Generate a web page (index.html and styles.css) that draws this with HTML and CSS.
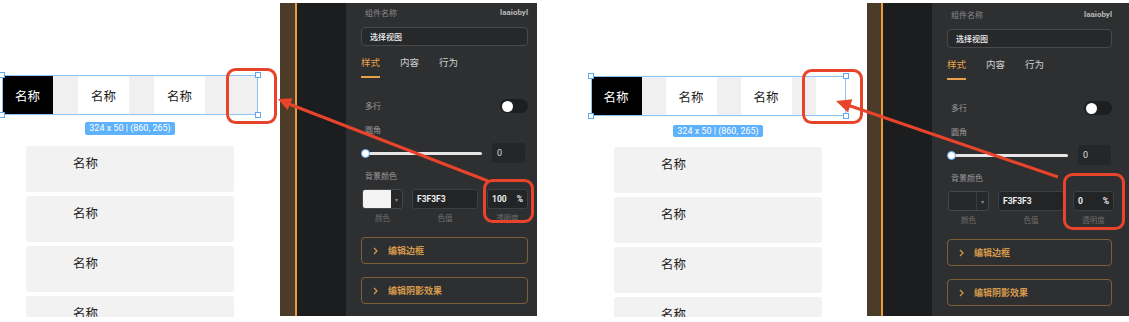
FILE: index.html
```html
<!DOCTYPE html>
<html lang="zh">
<head>
<meta charset="utf-8">
<title>分段选择器 透明度</title>
<link rel="stylesheet" href="styles.css">
</head>
<body>
<main class="page">
  <section class="shot shot--a">
    <div class="canvas">
      <div class="canvas-col">
        <div class="seg">
          <div class="seg-cell seg-cell--on">名称</div>
          <div class="seg-gap"></div>
          <div class="seg-cell">名称</div>
          <div class="seg-gap"></div>
          <div class="seg-cell">名称</div>
          <div class="seg-gap seg-gap--tail"></div>
          <span class="handle handle--tl"></span>
          <span class="handle handle--tr"></span>
          <span class="handle handle--bl"></span>
          <span class="handle handle--br"></span>
        </div>
        <div class="size-tag">324 x 50 | (860, 265)</div>
        <ul class="list">
          <li class="list-item">名称</li>
          <li class="list-item">名称</li>
          <li class="list-item">名称</li>
          <li class="list-item">名称</li>
        </ul>
      </div>
    </div>
    <div class="side">
      <div class="rail"></div>
      <div class="rail-line"></div>
      <div class="gutter"></div>
      <aside class="panel">
        <div class="panel-head"><span class="muted">组件名称</span><span class="ident">laaiobyl</span></div>
        <div class="field field--name">选择视图</div>
        <nav class="tabs"><span class="tab tab--on">样式</span><span class="tab">内容</span><span class="tab">行为</span></nav>
        <div class="row row--toggle"><span class="label">多行</span><span class="toggle"><span class="knob"></span></span></div>
        <div class="label label--block label--gap12">圆角</div>
        <div class="row row--slider"><div class="slider"><span class="slider-track"></span><span class="slider-thumb"></span></div><div class="num">0</div></div>
        <div class="label label--block label--gap8">背景颜色</div>
        <div class="color-row">
          <div class="swatch"><span class="swatch-fill"></span><span class="swatch-caret">▾</span></div>
          <div class="field field--hex">F3F3F3</div>
          <div class="field field--alpha"><span>100</span><span>%</span></div>
        </div>
        <div class="color-labels"><span>颜色</span><span>色值</span><span>透明度</span></div>
        <div class="fold"><svg class="chev" viewBox="0 0 5 8" width="5" height="8"><polyline points="1,1 4,4 1,7" /></svg><span>编辑边框</span></div>
        <div class="fold"><svg class="chev" viewBox="0 0 5 8" width="5" height="8"><polyline points="1,1 4,4 1,7" /></svg><span>编辑阴影效果</span></div>
      </aside>
    </div>
    <svg class="notes" width="537" height="322" viewBox="0 0 537 322">
      <rect x="227.5" y="69.5" width="48" height="53" rx="8" />
      <rect x="484.5" y="180.5" width="48" height="41" rx="8" />
      <line x1="488" y1="181" x2="289" y2="104" />
      <polygon points="278,99 292.5,98.3 287.6,110.2" />
    </svg>
  </section>

  <section class="shot shot--b">
    <div class="canvas">
      <div class="canvas-col">
        <div class="seg">
          <div class="seg-cell seg-cell--on">名称</div>
          <div class="seg-gap"></div>
          <div class="seg-cell">名称</div>
          <div class="seg-gap"></div>
          <div class="seg-cell">名称</div>
          <div class="seg-gap"></div>
          <div class="seg-end"></div>
          <span class="handle handle--tl"></span>
          <span class="handle handle--tr"></span>
          <span class="handle handle--bl"></span>
          <span class="handle handle--br"></span>
        </div>
        <div class="size-tag">324 x 50 | (860, 265)</div>
        <ul class="list">
          <li class="list-item">名称</li>
          <li class="list-item">名称</li>
          <li class="list-item">名称</li>
          <li class="list-item">名称</li>
        </ul>
      </div>
    </div>
    <div class="side">
      <div class="rail"></div>
      <div class="rail-line"></div>
      <div class="gutter"></div>
      <aside class="panel">
        <div class="panel-head"><span class="muted">组件名称</span><span class="ident">laaiobyl</span></div>
        <div class="field field--name">选择视图</div>
        <nav class="tabs"><span class="tab tab--on">样式</span><span class="tab">内容</span><span class="tab">行为</span></nav>
        <div class="row row--toggle"><span class="label">多行</span><span class="toggle"><span class="knob"></span></span></div>
        <div class="label label--block label--gap12">圆角</div>
        <div class="row row--slider"><div class="slider"><span class="slider-track"></span><span class="slider-thumb"></span></div><div class="num">0</div></div>
        <div class="label label--block label--gap8">背景颜色</div>
        <div class="color-row">
          <div class="swatch swatch--clear"><span class="swatch-fill"></span><span class="swatch-caret">▾</span></div>
          <div class="field field--hex">F3F3F3</div>
          <div class="field field--alpha"><span>0</span><span>%</span></div>
        </div>
        <div class="color-labels"><span>颜色</span><span>色值</span><span>透明度</span></div>
        <div class="fold"><svg class="chev" viewBox="0 0 5 8" width="5" height="8"><polyline points="1,1 4,4 1,7" /></svg><span>编辑边框</span></div>
        <div class="fold"><svg class="chev" viewBox="0 0 5 8" width="5" height="8"><polyline points="1,1 4,4 1,7" /></svg><span>编辑阴影效果</span></div>
      </aside>
    </div>
    <svg class="notes" width="541" height="322" viewBox="0 0 541 322">
      <rect x="215.5" y="70.5" width="58" height="52" rx="8" />
      <rect x="476.5" y="174.5" width="59" height="54" rx="8" />
      <line x1="470" y1="177" x2="261" y2="105.5" />
      <polygon points="248,101 264.4,99.2 260,112.4" />
    </svg>
  </section>
</main>
</body>
</html>
```

FILE: styles.css
```css
* { box-sizing: border-box; margin: 0; padding: 0; }
html, body { background: #ffffff; }
body {
  width: 1129px;
  height: 322px;
  overflow: hidden;
  font-family: "Noto Sans CJK SC", "Noto Sans", sans-serif;
}

.page { display: flex; height: 322px; }

.shot { position: relative; display: flex; flex: none; height: 322px; }
.shot--a { width: 537px; }
.shot--b { width: 541px; margin-left: 51px; }

/* ---------- canvas ---------- */
.canvas { flex: none; width: 280px; height: 317px; overflow: hidden; padding: 75px 0 0 2px; }
.shot--b .canvas { width: 279px; padding-top: 76px; }
.canvas-col { width: 256px; display: flex; flex-direction: column; align-items: center; }

.seg { position: relative; display: flex; width: 256px; height: 40px; flex: none; }
.shot--b .seg { width: 255px; }
.seg::after { content: ""; position: absolute; inset: 0; border: 1px solid #8cc3f5; }
.seg-cell {
  width: 51px; flex: none;
  display: flex; align-items: center; justify-content: center;
  background: #ffffff; color: #222; font-size: 12.5px;
}
.seg-cell--on { background: #000000; color: #ffffff; }
.seg-gap { width: 25px; flex: none; background: #f0f0f0; }
.shot--b .seg-gap { width: 24px; }
.seg-gap--tail { width: 53px; }
.seg-end { flex: 1; background: #ffffff; }

.handle {
  position: absolute; width: 6px; height: 6px;
  background: #fff; border: 1px solid #5ea9ef; z-index: 2;
}
.handle--tl { left: -3px; top: -3px; }
.handle--tr { right: -3px; top: -3px; }
.handle--bl { left: -3px; bottom: -3px; }
.handle--br { right: -3px; bottom: -3px; }

.size-tag {
  margin-top: 7px; height: 13px; padding: 0 4px;
  background: #5eb1fb; color: #fff; border-radius: 2px;
  font: 9px/13px Roboto, "Noto Sans", sans-serif;
  white-space: nowrap;
}
.shot--b .size-tag { margin-top: 9px; height: 12px; line-height: 12px; }

.list { list-style: none; margin-top: 11px; width: 208px; display: flex; flex-direction: column; gap: 4px; }
.shot--b .list { margin-top: 10px; }
.list-item {
  flex: none; height: 46px; background: #f2f2f2; border-radius: 3px;
  padding: 9px 0 0 47px; font-size: 12.5px; line-height: 16px; color: #222;
}

/* ---------- editor side ---------- */
.side { flex: 1; display: flex; margin-top: 3px; height: 313px; }
.rail { width: 15px; flex: none; background: #4a3c29; }
.shot--b .rail { width: 14px; }
.rail-line { width: 2px; flex: none; background: #ea9a3a; }
.gutter { width: 49px; flex: none; background: #1b1d1f; }
.panel { flex: 1; background: #2e2f31; padding: 5px 0 0 15px; }

.panel-head { width: 167px; height: 10px; display: flex; justify-content: space-between; align-items: center; padding-left: 4px; }
.shot--b .panel-head { margin-top: 2px; width: 165px; }
.muted { font-size: 8px; line-height: 10px; color: #8b8b8b; }
.ident { font: 700 8px/10px Roboto, sans-serif; color: #b8b8b8; }

.field { height: 19px; border: 1px solid #48494b; border-radius: 4px; background: #27282a; }
.field--name { margin-top: 9px; width: 167px; padding-left: 8px; font-size: 8px; line-height: 17px; color: #f0f0f0; font-weight: 500; }
.shot--b .field--name { width: 165px; }

.tabs { margin-top: 10px; display: flex; gap: 20px; }
.tab { font-size: 9.5px; line-height: 12px; padding-bottom: 8px; color: #d0d0d0; border-bottom: 2px solid transparent; }
.tab--on { color: #e6a24a; border-bottom-color: #e6a24a; }

.row { width: 167px; display: flex; align-items: center; }
.shot--b .row { width: 165px; }
.row--toggle { margin-top: 21px; height: 14px; padding-left: 4px; justify-content: space-between; }
.toggle { width: 28px; height: 14px; border-radius: 7px; background: #1d1e20; display: flex; align-items: center; padding-left: 1.5px; }
.knob { width: 11px; height: 11px; border-radius: 50%; background: #ffffff; }

.label { font-size: 8px; line-height: 10px; color: #9b9b9b; }
.label--block { padding-left: 4px; }
.label--gap12 { margin-top: 12px; }
.label--gap8 { margin-top: 8px; }

.row--slider { margin-top: 8px; height: 20px; }
.slider { position: relative; width: 121px; height: 9px; display: flex; align-items: center; padding-left: 4px; }
.slider-track { flex: 1; height: 3px; border-radius: 2px; background: #e6e6e6; }
.slider-thumb { position: absolute; left: 0; top: 0; width: 9px; height: 9px; border-radius: 50%; background: #fff; border: 1.5px solid #5aa8f0; }
.num { margin-left: 10px; width: 33px; height: 20px; border-radius: 3px; background: #252628; padding-left: 5px; font: 9px/20px Roboto, sans-serif; color: #dcdcdc; }

.color-row { margin-top: 8px; margin-left: 1px; height: 20px; display: grid; grid-template-columns: 41px 66px 41px; column-gap: 9px; }
.swatch { display: flex; height: 20px; border: 1px solid #454648; border-radius: 3px; overflow: hidden; background: #27282a; }
.swatch-fill { width: 28px; background: #f3f3f3; }
.swatch--clear .swatch-fill { background: transparent; border-right: 1px solid #3a3b3d; }
.swatch-caret { flex: 1; display: flex; align-items: center; justify-content: center; color: #8a8a8a; font-size: 6px; }
.field--hex, .field--alpha {
  height: 20px; border-radius: 3px; border-color: #3e3f41; background: #232426;
  padding: 0 4px; font: 700 8.5px/18px Roboto, sans-serif; color: #eeeeee;
}
.field--alpha { display: flex; justify-content: space-between; }

.color-labels { margin-top: 4px; margin-left: 1px; display: grid; grid-template-columns: 41px 66px 41px; column-gap: 9px; text-align: center; font-size: 7.5px; line-height: 10px; color: #6d6d6d; }

.fold {
  margin-top: 14px; width: 167px; height: 27px;
  border: 1px solid #7e6038; border-radius: 4px;
  display: flex; align-items: center; gap: 10px; padding-left: 11px;
  color: #d69b4b; font-size: 9px; font-weight: 700;
}
.shot--b .fold { width: 165px; }
.fold + .fold { margin-top: 13px; }
.chev polyline { fill: none; stroke: #d69b4b; stroke-width: 1.2; }

/* ---------- annotations ---------- */
.notes { position: absolute; left: 0; top: 0; pointer-events: none; overflow: visible; }
.notes rect { fill: none; stroke: #e8432b; stroke-width: 3; }
.notes line { stroke: #e8432b; stroke-width: 3; }
.notes polygon { fill: #e8432b; }
```
